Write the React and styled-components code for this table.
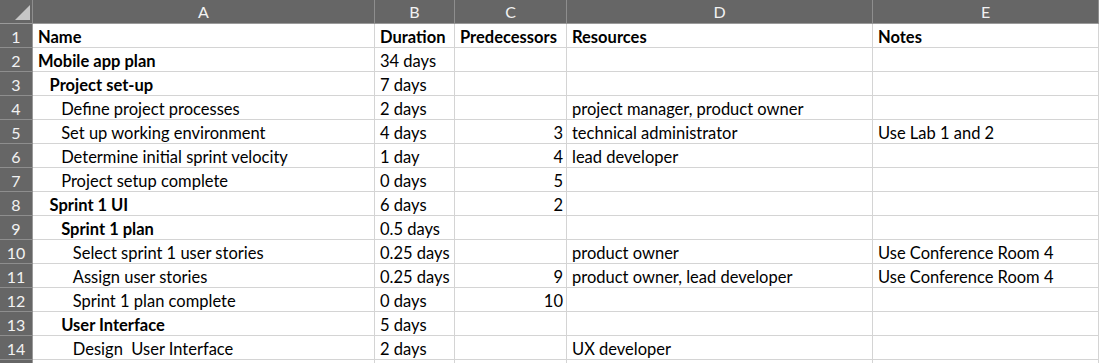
import React from "react";
import styled, { createGlobalStyle } from "styled-components";

const GlobalStyle = createGlobalStyle`
  html, body {
    margin: 0;
    padding: 0;
    background: #ffffff;
  }
`;

const columns = [
  { key: "A", width: 342 },
  { key: "B", width: 80 },
  { key: "C", width: 112 },
  { key: "D", width: 306 },
  { key: "E", width: 226 },
];

// [name, indent level, bold, duration, predecessors, resources, notes, header]
const rows = [
  ["Name", 0, true, "Duration", "Predecessors", "Resources", "Notes", true],
  ["Mobile app plan", 0, true, "34 days", "", "", ""],
  ["Project set-up", 1, true, "7 days", "", "", ""],
  ["Define project processes", 2, false, "2 days", "", "project manager, product owner", ""],
  ["Set up working environment", 2, false, "4 days", "3", "technical administrator", "Use Lab 1 and 2"],
  ["Determine initial sprint velocity", 2, false, "1 day", "4", "lead developer", ""],
  ["Project setup complete", 2, false, "0 days", "5", "", ""],
  ["Sprint 1 UI", 1, true, "6 days", "2", "", ""],
  ["Sprint 1 plan", 2, true, "0.5 days", "", "", ""],
  ["Select sprint 1 user stories", 3, false, "0.25 days", "", "product owner", "Use Conference Room 4"],
  ["Assign user stories", 3, false, "0.25 days", "9", "product owner, lead developer", "Use Conference Room 4"],
  ["Sprint 1 plan complete", 3, false, "0 days", "10", "", ""],
  ["User Interface", 2, true, "5 days", "", "", ""],
  ["Design  User Interface", 3, false, "2 days", "", "UX developer", ""],
];

const Viewport = styled.div`
  height: 363px;
  overflow: hidden;
`;

const Sheet = styled.div`
  display: grid;
  grid-template-columns: 33px ${columns.map((c) => `${c.width}px`).join(" ")};
  grid-auto-rows: 24px;
  font-family: Lato, "Liberation Sans", sans-serif;
  font-size: 16.5px;
  color: #000;
  white-space: pre;
`;

const Corner = styled.div`
  background: #666666;
  border-right: 1px solid #8e8e8e;
  border-bottom: 1px solid #9a9a9a;
  box-sizing: border-box;
  display: flex;
  align-items: flex-end;
  justify-content: flex-end;
  padding: 0 2px 3px 0;

  &::after {
    content: "";
    width: 0;
    height: 0;
    border-left: 15px solid transparent;
    border-bottom: 15px solid #c6c6c6;
  }
`;

const ColHead = styled.div`
  background: #666666;
  color: #f2f2f2;
  border-right: 1px solid #8e8e8e;
  border-bottom: 1px solid #9a9a9a;
  box-sizing: border-box;
  display: flex;
  align-items: center;
  justify-content: center;
  font-size: 16px;
`;

const RowHead = styled.div`
  background: #666666;
  color: #f2f2f2;
  border-bottom: 1px solid #8e8e8e;
  border-right: 1px solid #9a9a9a;
  box-sizing: border-box;
  display: flex;
  align-items: center;
  justify-content: center;
  padding-top: 1px;
  font-size: 16px;
`;

const Cell = styled.div`
  border-right: 1px solid #d4d4d4;
  border-bottom: 1px solid #d4d4d4;
  box-sizing: border-box;
  display: flex;
  align-items: center;
  overflow: hidden;
  padding: 3px ${(p) => (p.$right ? "3px" : "0")} 0 ${(p) => 5 + p.$indent * 11.6}px;
  justify-content: ${(p) => (p.$right ? "flex-end" : "flex-start")};
  font-weight: ${(p) => (p.$bold ? 700 : 400)};
`;

export default function App() {
  return (
    <>
      <GlobalStyle />
      <Viewport>
        <Sheet>
          <Corner />
          {columns.map((c) => (
            <ColHead key={c.key}>{c.key}</ColHead>
          ))}
          {rows.map((r, i) => {
            const [name, level, bold, duration, pred, res, notes, header] = r;
            return (
              <React.Fragment key={i}>
                <RowHead>{i + 1}</RowHead>
                <Cell $indent={level} $bold={bold}>{name}</Cell>
                <Cell $indent={0} $bold={header}>{duration}</Cell>
                <Cell $indent={0} $bold={header} $right={!header}>
                  {pred}
                </Cell>
                <Cell $indent={0} $bold={header}>{res}</Cell>
                <Cell $indent={0} $bold={header}>{notes}</Cell>
              </React.Fragment>
            );
          })}
          {/* partly visible row 15 at the bottom edge */}
          <RowHead />
          {columns.map((c) => (
            <Cell key={c.key} $indent={0} />
          ))}
        </Sheet>
      </Viewport>
    </>
  );
}
